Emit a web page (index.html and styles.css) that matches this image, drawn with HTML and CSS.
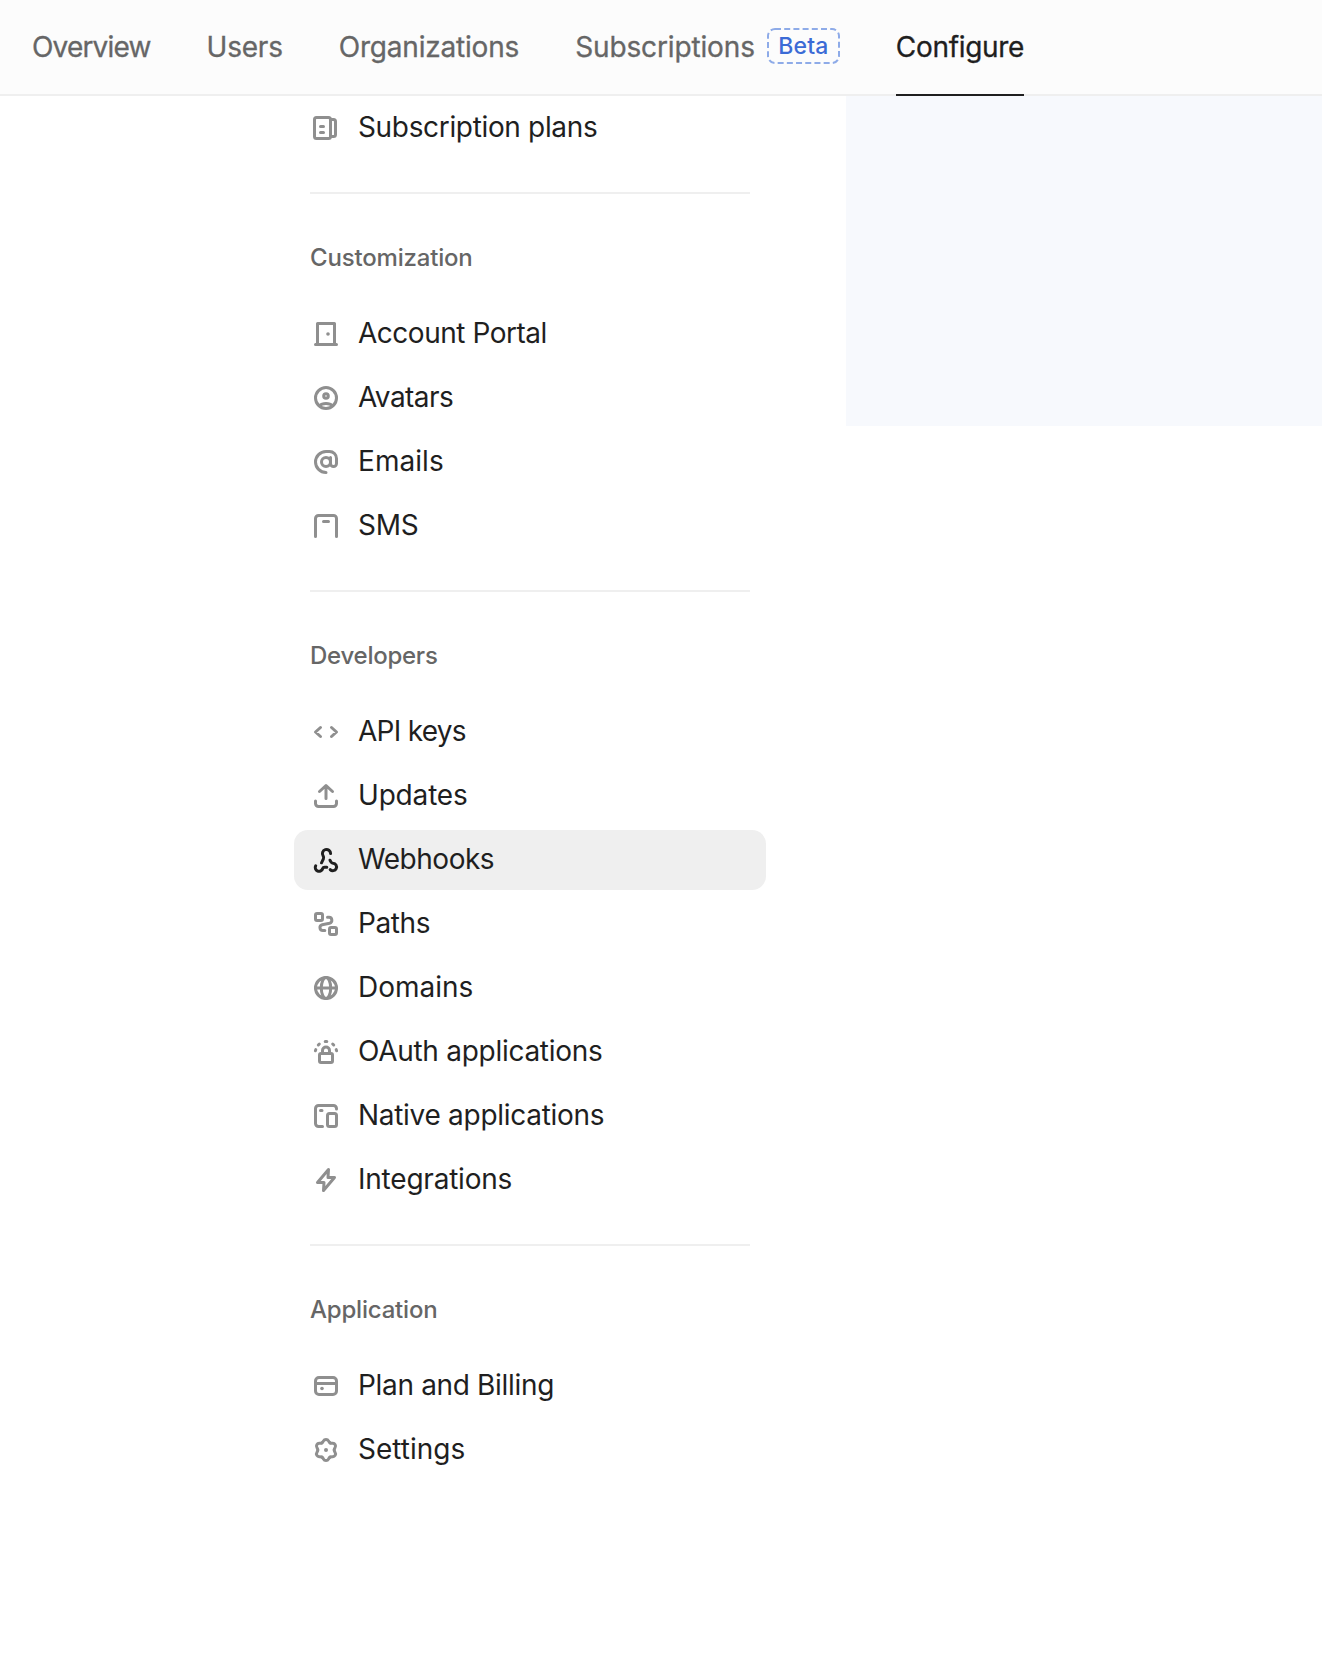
FILE: index.html
```html
<!DOCTYPE html>
<html lang="en">
<head>
<meta charset="utf-8">
<title>Configure</title>
<link rel="stylesheet" href="styles.css">
</head>
<body>
<header class="topbar">
  <nav class="tabs">
    <a class="tab tab-overview">Overview</a>
    <a class="tab tab-users">Users</a>
    <a class="tab tab-orgs">Organizations</a>
    <a class="tab tab-subs">Subscriptions<span class="badge"><svg class="badge-frame" viewBox="0 0 73 36"><rect x="1" y="1" width="71" height="34" rx="7"/></svg>Beta</span></a>
    <a class="tab tab-active">Configure</a>
  </nav>
</header>
<div class="body">
  <aside class="sidebar">
    <section class="group">
      <a class="item"><svg class="icon" viewBox="0 0 32 32"><rect x="4.5" y="5.5" width="16" height="21" rx="2"/><path d="M20.5 7.5h3a2 2 0 0 1 2 2v13a2 2 0 0 1-2 2h-3M10.5 14.5h3M10.5 20.5h3"/></svg><span class="label w-plans">Subscription plans</span></a>
    </section>
    <section class="group">
      <h2 class="heading h-custom">Customization</h2>
      <a class="item"><svg class="icon" viewBox="0 0 32 32"><path d="M7.5 26.5v-21h17v21M5.5 26.5h21"/><circle class="dot" cx="18" cy="16" r="1.8"/></svg><span class="label w-portal">Account Portal</span></a>
      <a class="item"><svg class="icon" viewBox="0 0 32 32"><circle cx="16" cy="16" r="10.5"/><circle cx="16" cy="14" r="2.3"/><path d="M9.5 23.7c1.4-1.4 3.7-2.1 6.5-2.1s5.1.7 6.5 2.1"/></svg><span class="label w-avatars">Avatars</span></a>
      <a class="item"><svg class="icon" viewBox="0 0 32 32"><circle cx="16" cy="16" r="4.5"/><path d="M20.5 11.5v6a3 3 0 0 0 6 0v-5a7 7 0 0 0-7-7H16a10.5 10.5 0 0 0 0 21"/></svg><span class="label w-emails">Emails</span></a>
      <a class="item"><svg class="icon" viewBox="0 0 32 32"><path d="M5.5 26.5v-18a3 3 0 0 1 3-3h15a3 3 0 0 1 3 3v18M13.5 11.5h5"/></svg><span class="label w-sms">SMS</span></a>
    </section>
    <section class="group">
      <h2 class="heading h-dev">Developers</h2>
      <a class="item"><svg class="icon" viewBox="0 0 32 32"><path d="M10.5 11.5l-5 4.500 5 4.500M21.5 11.5l5 4.500-5 4.500"/></svg><span class="label w-api">API keys</span></a>
      <a class="item"><svg class="icon" viewBox="0 0 32 32"><path d="M9.5 11.5L16 5.500l6.500 6M16 6.500v12M5.500 21v2.500a3 3 0 0 0 3 3h15a3 3 0 0 0 3-3V21"/></svg><span class="label w-updates">Updates</span></a>
      <a class="item item-active"><svg class="icon" viewBox="0 0 32 32"><path d="M20.600 9.500a4.100 4.100 0 1 0-7.500 2.300c.7 1.100.8 1.900.3 3l-1.900 4M20 16.200l.9 1.700c.5.900 1.200 1.300 2.200 1.400a3.700 3.700 0 1 1-2.900 6.300M5.700 21.700a3.800 3.800 0 1 0 7 2.800c.3-.9.900-1.300 1.800-1.300h2.300"/></svg><span class="label w-hooks">Webhooks</span></a>
      <a class="item"><svg class="icon" viewBox="0 0 32 32"><rect x="5.500" y="5.500" width="7" height="7" rx="1.500"/><rect x="19.500" y="19.500" width="7" height="7" rx="1.500"/><path d="M17.500 9.300H19a3 3 0 0 1 .6 5.900l-7.400 1.500a3 3 0 0 0 .6 5.900h2"/></svg><span class="label">Paths</span></a>
      <a class="item"><svg class="icon" viewBox="0 0 32 32"><circle cx="16" cy="16" r="10.500"/><ellipse cx="16" cy="16" rx="4.700" ry="10.500"/><path d="M5.500 16h21"/></svg><span class="label w-domains">Domains</span></a>
      <a class="item"><svg class="icon" viewBox="0 0 32 32"><rect x="9.500" y="17.500" width="13" height="9" rx="1.500"/><path d="M12.500 17v-2.500a3.500 3.500 0 0 1 7 0V17M5.800 13.600l-.4 1.200M8.300 9l1-1M15.200 5.500h1.600M22.700 8l1 1M26.200 13.600l.4 1.200"/></svg><span class="label w-oauth">OAuth applications</span></a>
      <a class="item"><svg class="icon" viewBox="0 0 32 32"><path d="M26.500 9v-.5a3 3 0 0 0-3-3h-15a3 3 0 0 0-3 3v15a3 3 0 0 0 3 3h4M10.500 10.500H12"/><rect x="17.500" y="13.500" width="9" height="13" rx="2"/></svg><span class="label w-native">Native applications</span></a>
      <a class="item"><svg class="icon" viewBox="0 0 32 32"><path d="M18.500 5.500l-11 13H14l-.5 8 11-13H18z"/></svg><span class="label w-integ">Integrations</span></a>
    </section>
    <section class="group">
      <h2 class="heading h-app">Application</h2>
      <a class="item"><svg class="icon" viewBox="0 0 32 32"><rect x="5.500" y="7.500" width="21" height="17" rx="3.500"/><path d="M5.500 13.500h21"/><circle class="dot" cx="12" cy="18.500" r="1.800"/></svg><span class="label w-billing">Plan and Billing</span></a>
      <a class="item"><svg class="icon" viewBox="0 0 32 32"><defs><path id="tooth" d="M11.900 8.900C14.200 7.600 13 5.400 16 5.400S17.800 7.600 20.100 8.900"/></defs><use href="#tooth"/><use href="#tooth" transform="rotate(60 16 16)"/><use href="#tooth" transform="rotate(120 16 16)"/><use href="#tooth" transform="rotate(180 16 16)"/><use href="#tooth" transform="rotate(240 16 16)"/><use href="#tooth" transform="rotate(300 16 16)"/><circle class="dot" cx="16" cy="16" r="2"/></svg><span class="label w-settings">Settings</span></a>
    </section>
  </aside>
  <main class="panel"></main>
</div>
</body>
</html>
```

FILE: styles.css
```css
* { box-sizing: border-box; }
body {
  margin: 0;
  background: #fff;
  color: #1f1f1f;
  font-family: Inter, "Liberation Sans", sans-serif;
  font-size: 28px;
  letter-spacing: -0.4px;
}
.topbar {
  height: 96px;
  padding-left: 32px;
  background: #fcfcfc;
  border-bottom: 2px solid #efefef;
}
.tabs { display: flex; gap: 56px; height: 96px; }
.tab {
  display: flex;
  align-items: center;
  height: 96px;
  padding-bottom: 2px;
  color: #666;
  white-space: nowrap;
  -webkit-text-stroke: 0.3px currentColor;
}
.tab-overview { letter-spacing: -0.83px; }
.tab-users { letter-spacing: -0.2px; }
.tab-orgs { letter-spacing: -0.2px; }
.tab-subs { letter-spacing: -0.13px; }
.tab-active {
  color: #1f1f1f;
  border-bottom: 2px solid #1f1f1f;
  padding-bottom: 0;
  letter-spacing: -0.32px;
}
.badge {
  position: relative;
  display: flex;
  align-items: center;
  justify-content: center;
  width: 73px;
  height: 36px;
  margin: -2px 0 0 12px;
  padding-bottom: 1px;
  color: #3b6bd6;
  font-size: 23px;
  font-weight: 500;
  letter-spacing: 0.1px;
  -webkit-text-stroke: 0;
}
.badge-frame {
  position: absolute;
  inset: 0;
  fill: none;
  stroke: #8eabe8;
  stroke-width: 2;
  stroke-dasharray: 6 3.2;
}
.body { display: flex; align-items: flex-start; }
.sidebar { width: 472px; margin: 2px 80px 0 294px; }
.group { display: flex; flex-direction: column; gap: 4px; }
.group + .group { padding-top: 4px; }
.group + .group::before {
  content: "";
  height: 2px;
  margin: 30px 16px 0;
  background: #efefef;
}
.heading {
  height: 102px;
  margin: 0;
  padding: 0 16px;
  color: #666;
  font-size: 24px;
  font-weight: 500;
  line-height: 120px;
}
.h-custom { letter-spacing: -0.18px; }
.h-dev { letter-spacing: -0.25px; }
.h-app { letter-spacing: -0.2px; }
.item {
  display: flex;
  align-items: center;
  gap: 16px;
  height: 60px;
  padding: 0 16px;
  border-radius: 14px;
  white-space: nowrap;
}
.item-active { background: #efefef; }
.label { padding-bottom: 2px; }
.w-plans { letter-spacing: -0.34px; }
.w-portal { letter-spacing: -0.48px; }
.w-avatars { letter-spacing: -0.55px; }
.w-emails { letter-spacing: 0.05px; }
.w-sms { letter-spacing: -0.2px; }
.w-api { letter-spacing: -0.73px; }
.w-updates { letter-spacing: -0.18px; }
.w-hooks { letter-spacing: -0.47px; }
.w-domains { letter-spacing: -0.03px; }
.w-oauth { letter-spacing: -0.28px; }
.w-native { letter-spacing: -0.29px; }
.w-integ { letter-spacing: -0.22px; }
.w-billing { letter-spacing: -0.33px; }
.w-settings { letter-spacing: 0; }
.icon {
  width: 32px;
  height: 32px;
  flex: none;
  fill: none;
  stroke: #8f8f8f;
  stroke-width: 3;
  stroke-linecap: round;
  stroke-linejoin: round;
}
.icon .dot { fill: #8f8f8f; stroke: none; }
.item-active .icon { stroke: #1f1f1f; }
.panel { flex: 1; height: 330px; background: #f7f9fd; }
```
